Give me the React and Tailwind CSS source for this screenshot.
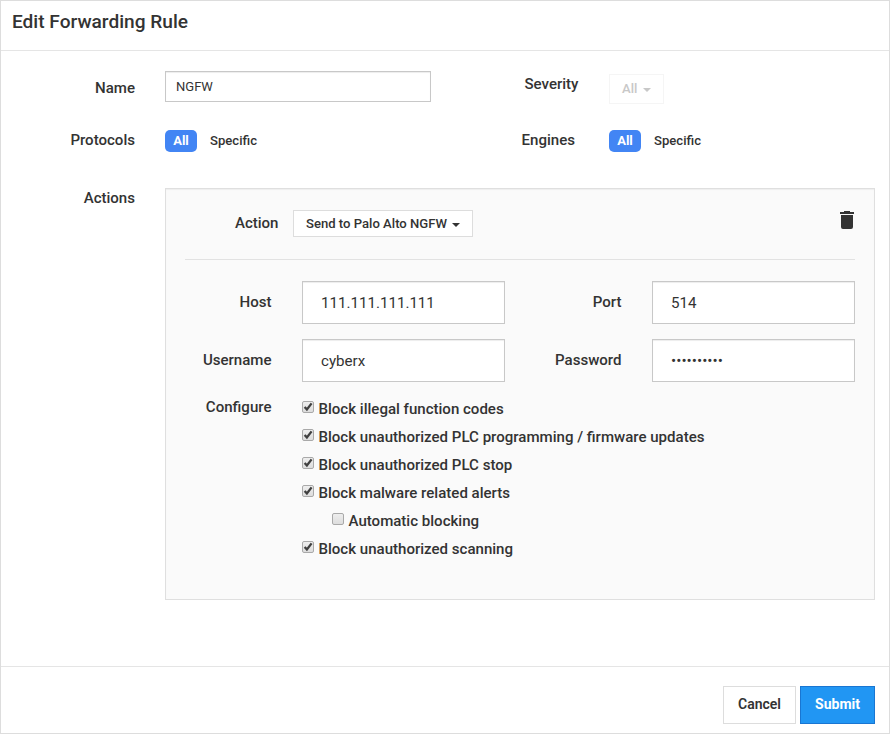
import React from "react";

function Caret({ className = "" }) {
  return (
    <span
      className={`inline-block border-x-4 border-t-4 border-x-transparent border-t-current ${className}`}
    />
  );
}

function Label({ children, className = "" }) {
  return (
    <label className={`shrink-0 text-right text-[15.06px] leading-5 font-medium whitespace-nowrap ${className}`}>
      {children}
    </label>
  );
}

function Toggle() {
  return (
    <div className="flex h-[22px] items-center text-[13.1px] leading-[22px] font-medium">
      <button className="h-[22px] w-8 rounded-[5px] bg-[#4285f4] text-[13px] font-bold text-white">All</button>
      <button className="ml-[13px]">Specific</button>
    </div>
  );
}

function Field({ label, value, type = "text" }) {
  return (
    <div className="flex">
      <Label className="mt-[11px] mr-[30.5px] w-[86.5px]">{label}</Label>
      <input
        type={type}
        defaultValue={value}
        className={`h-[43px] w-[203px] border border-[#c8c8c8] bg-white px-[18px] shadow-[inset_0_1px_1px_rgba(0,0,0,0.075)] outline-none ${
          type === "password" ? "text-[15.4px]" : "text-[15.12px]"
        }`}
      />
    </div>
  );
}

function Check({ children, checked, className = "" }) {
  return (
    <label className={`flex h-7 items-start text-[15.06px] leading-5 font-medium whitespace-nowrap ${className}`}>
      <span className="mt-0.5 mr-[4.5px] block h-3 w-3 shrink-0 rounded-[2px] border border-[#a9a9a9] bg-linear-to-b from-[#eeeeee] to-[#dddddd]">
        {checked && (
          <svg viewBox="0 0 10 10" className="block h-[10px] w-[10px]">
            <path d="M1.6 5 3.9 7.4 8.6 1.4" fill="none" stroke="#404040" strokeWidth="2.3" />
          </svg>
        )}
      </span>
      <span>{children}</span>
    </label>
  );
}

export default function App() {
  return (
    <div className="flex h-[734px] w-[890px] flex-col border border-[#dddddd] bg-white font-[Roboto,sans-serif] text-[#333333]">
      <header className="h-[50px] shrink-0 border-b border-[#e5e5e5] pt-2 pl-[11px]">
        <h1 className="text-[19.1px] leading-[25px] font-medium">Edit Forwarding Rule</h1>
      </header>

      <main className="flex h-[615px] shrink-0 flex-col pt-5">
        <div className="flex h-[59px] items-start">
          <Label className="mt-[7px] w-[134px]">Name</Label>
          <input
            defaultValue="NGFW"
            className="ml-[30px] h-[31px] w-[266px] border border-[#c8c8c8] bg-white px-[10px] text-[13px] shadow-[inset_0_1px_1px_rgba(0,0,0,0.075)] outline-none"
          />
          <Label className="mt-[3px] w-[147.5px]">Severity</Label>
          <button className="mt-[3px] ml-[30.5px] flex h-[30px] w-[55px] items-center border border-[#f5f5f5] pl-3 text-[13.1px] font-medium text-[#c8c8c8]">
            All
            <Caret className="mt-[2px] ml-[6px]" />
          </button>
        </div>
        <div className="flex h-[58px] items-start">
          <Label className="w-[134px]">Protocols</Label>
          <div className="ml-[30px] w-[266px]">
            <Toggle />
          </div>
          <Label className="w-[144px]">Engines</Label>
          <div className="ml-[34px]">
            <Toggle />
          </div>
        </div>
        <div className="flex items-start">
          <Label className="w-[134px]">Actions</Label>
          <section className="ml-[30px] h-[412px] w-[710px] border border-[#dfdfdf] bg-[#fafafa] px-[19px] shadow-[inset_0_1px_1px_rgba(0,0,0,0.05)]">
            <div className="flex h-[71px] items-start border-b border-[#e2e2e2] pt-[21px]">
              <Label className="mt-[3px] w-[93.5px]">Action</Label>
              <button className="ml-[14.5px] flex h-[27px] w-[180px] items-center border border-[#dddddd] bg-white pl-3 text-[13.1px] font-medium whitespace-nowrap">
                Send to Palo Alto NGFW
                <Caret className="mt-[2px] ml-[5px]" />
              </button>
              <button aria-label="Delete action" className="mt-px mr-[1px] ml-auto">
                <svg viewBox="0 0 14 18" className="block h-[18px] w-[14px]" fill="#333333">
                  <path d="M4 0h6v1h4v2H0V1h4zM1 4h12v12q0 2-2 2H3q-2 0-2-2z" />
                </svg>
              </button>
            </div>
            <div className="mt-[21px] flex justify-between">
              <Field label="Host" value="111.111.111.111" />
              <Field label="Port" value="514" />
            </div>
            <div className="mt-[15px] flex justify-between">
              <Field label="Username" value="cyberx" />
              <Field label="Password" value="xxxxxxxxxx" type="password" />
            </div>
            <div className="mt-[15px] flex items-start">
              <Label className="mr-[30.5px] w-[86.5px]">Configure</Label>
              <div className="mt-[2px]">
                <Check checked>Block illegal function codes</Check>
                <Check checked>Block unauthorized PLC programming / firmware updates</Check>
                <Check checked>Block unauthorized PLC stop</Check>
                <Check checked>Block malware related alerts</Check>
                <Check className="ml-[30px]">Automatic blocking</Check>
                <Check checked>Block unauthorized scanning</Check>
              </div>
            </div>
          </section>
        </div>
      </main>

      <footer className="flex flex-1 justify-end gap-1 border-t border-[#e5e5e5] pt-[19px] pr-[14px]">
        <button className="h-[38px] w-[73px] border border-[#dddddd] bg-white pb-px text-[14px] font-semibold">Cancel</button>
        <button className="h-[38px] w-[75px] border border-[#1976d2] bg-[#2196f3] pb-px text-[14px] font-bold text-white">
          Submit
        </button>
      </footer>
    </div>
  );
}
